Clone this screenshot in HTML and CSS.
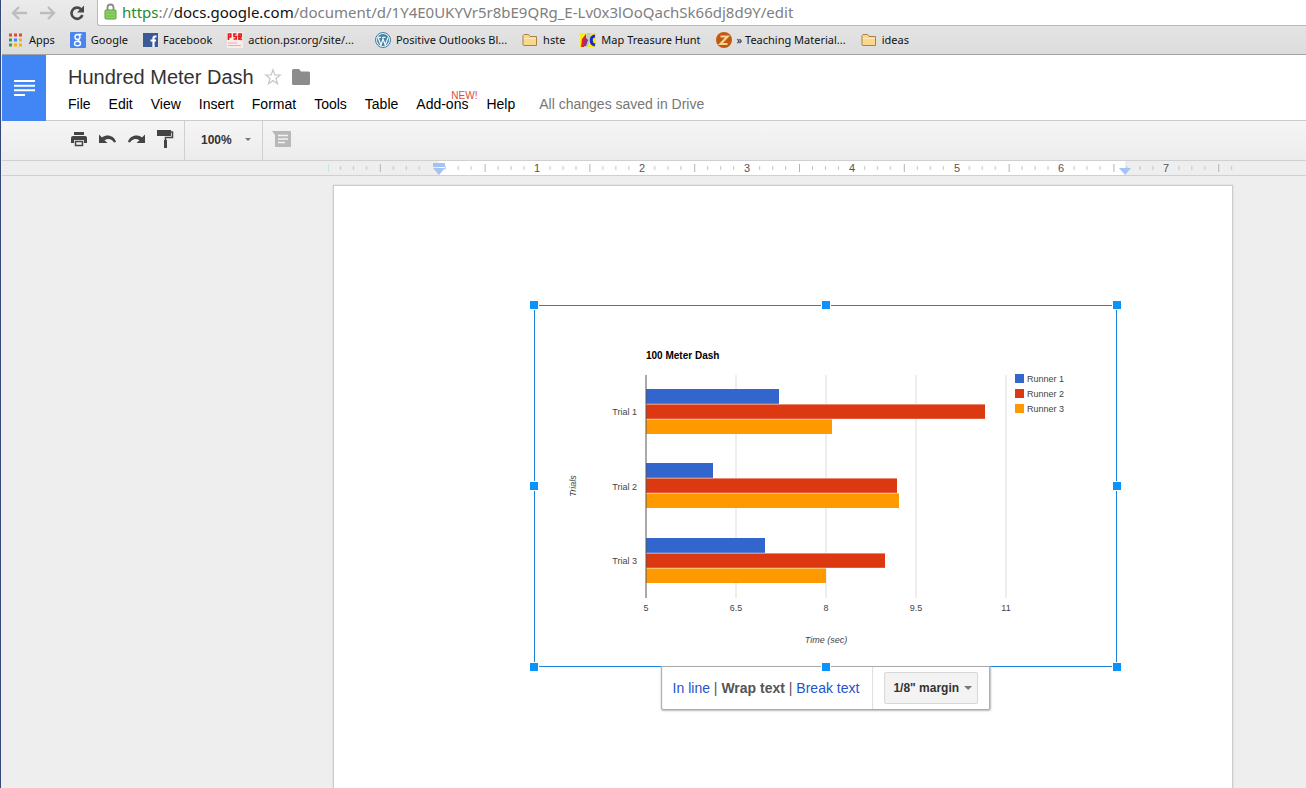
FILE: index.html
```
<!DOCTYPE html>
<html lang="en">
<head>
    <meta charset="UTF-8">
    <meta name="viewport" content="width=device-width, initial-scale=1.0">
    <title>Hundred Meter Dash</title>
    <link rel="stylesheet" href="styles.css">
</head>
<body>
    <!-- Browser bar -->
    <div class="browser">
        <div class="nav-row">
            <button class="nav-btn" aria-label="Back">
                <svg width="18" height="16" viewBox="0 0 18 16"><path d="M9 2L3 8l6 6M3 8h14" fill="none" stroke="#bdbdbd" stroke-width="2.4"/></svg>
            </button>
            <button class="nav-btn" aria-label="Forward">
                <svg width="18" height="16" viewBox="0 0 18 16"><path d="M9 2l6 6-6 6M15 8H1" fill="none" stroke="#bdbdbd" stroke-width="2.4"/></svg>
            </button>
            <button class="nav-btn" aria-label="Reload">
                <svg width="18" height="16" viewBox="0 0 18 16"><path d="M13 4.200A5.600 5.600 0 1 0 14.400 10" fill="none" stroke="#484848" stroke-width="2.600"/><path d="M16 .5v7H9z" fill="#484848"/></svg>
            </button>
            <div class="address">
                <svg width="13" height="17" viewBox="0 0 13 17"><path d="M3.500 8V4.500a3 3 0 0 1 6 0V8" fill="none" stroke="#8c8c8c" stroke-width="1.800"/><rect x="1" y="7" width="11" height="9" rx="1" fill="#8fd06a" stroke="#55a02e"/><path d="M2.500 10h8M2.500 13h8" stroke="#6ab844"/></svg>
                <div class="url" role="textbox" aria-label="Address" contenteditable="true" spellcheck="false"><span class="scheme">https</span>://<span class="host">docs.google.com</span>/document/d/1Y4E0UKYVr5r8bE9QRg_E-Lv0x3lOoQachSk66dj8d9Y/edit</div>
            </div>
        </div>
        <nav class="bookmarks">
            <a href="#">
                <svg width="16" height="16" viewBox="0 0 16 16"><path d="M1 3h3M6 3h3M11 3h3" stroke="#dd4b39" stroke-width="3"/><path d="M1 8h3" stroke="#3a9a4d" stroke-width="3"/><path d="M6 8h3" stroke="#4285f4" stroke-width="3"/><path d="M11 8h3" stroke="#f4b400" stroke-width="3"/><path d="M1 13h3" stroke="#3a9a4d" stroke-width="3"/><path d="M6 13h3M11 13h3" stroke="#f4b400" stroke-width="3"/></svg>
                Apps
            </a>
            <a href="#">
                <svg width="16" height="16" viewBox="0 0 16 16"><rect width="16" height="16" rx="1" fill="#4a86ee"/><g fill="none" stroke="#fff" stroke-width="1.400"><circle cx="7.500" cy="5" r="2.500"/><path d="M8 2.500h3.500M8.500 7.300c-1.500 1 1.800 1.800 2 3.700"/><ellipse cx="7.500" cy="11.500" rx="3" ry="2.200"/></g></svg>
                Google
            </a>
            <a href="#">
                <svg width="15" height="16" viewBox="0 0 15 16"><rect y="1" width="15" height="14" fill="#3b5998"/><path d="M13.500 4.500h-1.600c-1 0-1.400.5-1.400 1.500V15M7.500 8.500h5.500" fill="none" stroke="#fff" stroke-width="2.200"/></svg>
                Facebook
            </a>
            <a href="#">
                <svg width="16" height="16" viewBox="0 0 16 16"><rect width="16" height="16" fill="#fbecec"/><g fill="none" stroke="#e01c1c" stroke-width="1.700"><path d="M1.500 8V2h2.200v3H1.500M9.500 2H7v2.500h2.300V7H6.500M12 8V2h2.200v2.700H12l2.700 3.300"/></g><path d="M1 11h9M1 13.500h13" stroke="#f1a9a9"/></svg>
                action.psr.org/site/...
            </a>
            <a href="#" class="after-long">
                <svg width="16" height="16" viewBox="0 0 16 16"><circle cx="8" cy="8" r="7.500" fill="#e9f1f5" stroke="#3f7fa6"/><circle cx="8" cy="8" r="6" fill="#3f7fa6"/><path d="M3 5.500l3 7.500 2-6 2.300 6L13 5.500M2.500 5.300h3.500M7 5.300h3.500" fill="none" stroke="#f4f8fa" stroke-width="1.300"/></svg>
                Positive Outlooks Bl...
            </a>
            <a href="#">
                <svg width="16" height="16" viewBox="0 0 16 16"><path d="M1 13V3.500L2 2.500h4.500L8 4.500h6.500v9h-13z" fill="#fbd78c" stroke="#a9834a"/><path d="M2 6.500h12" stroke="#fdeabd"/></svg>
                hste
            </a>
            <a href="#">
                <svg width="16" height="16" viewBox="0 0 16 16"><path d="M0 1h16v14H0z" fill="#f6ec1c"/><path d="M7 1h4l-3 14H4z" fill="#bfc7d2"/><path d="M1 15l1-8 4-5v6l-2 7z" fill="#e0261c"/><path d="M5 5l3 3-2 6H4z" fill="#8b2c9b"/><path d="M15 4c-5 0-5 8 0 9" fill="none" stroke="#1c28c8" stroke-width="3"/></svg>
                Map Treasure Hunt
            </a>
            <a href="#">
                <svg width="16" height="16" viewBox="0 0 16 16"><circle cx="8" cy="8" r="8" fill="#c2590f"/><path d="M4.500 4.500h7l-7 7.500h7" fill="none" stroke="#f7d491" stroke-width="2.200"/></svg>
                » Teaching Material...
            </a>
            <a href="#">
                <svg width="16" height="16" viewBox="0 0 16 16"><path d="M1 13V3.500L2 2.500h4.500L8 4.500h6.500v9h-13z" fill="#fbd78c" stroke="#a9834a"/><path d="M2 6.500h12" stroke="#fdeabd"/></svg>
                ideas
            </a>
        </nav>
    </div>

    <!-- Document header -->
    <header class="doc-header">
        <a href="#" class="logo" aria-label="Docs home">
            <svg width="22" height="18" viewBox="0 0 22 18"><path d="M1 2h21M1 6.700h21M1 11.300h21M1 16h11" stroke="#fff" stroke-width="2"/></svg>
        </a>
        <div class="doc-head">
            <div class="title-row">
                <h1>Hundred Meter Dash</h1>
                <button aria-label="Star">
                    <svg width="18" height="18" viewBox="0 0 18 18"><path d="M9 1.800l1.900 5.100 5.400.2-4.300 3.300 1.500 5.300L9 12.600l-4.500 3.100L6 10.400 1.700 7.100l5.400-.2z" fill="#fff" stroke="#c9c9c9" stroke-width="1.300"/></svg>
                </button>
                <button aria-label="Move to folder">
                    <svg width="18" height="16" viewBox="0 0 18 16"><path d="M0 1.500Q0 0 1.500 0H7l2 2.500h7.500Q18 2.500 18 4v10.500Q18 16 16.500 16h-15Q0 16 0 14.500z" fill="#8c8c8c"/></svg>
                </button>
            </div>
            <div class="menu-row">
                <button>File</button>
                <button>Edit</button>
                <button>View</button>
                <button>Insert</button>
                <button>Format</button>
                <button>Tools</button>
                <button>Table</button>
                <button class="addons">Add-ons<span class="new">NEW!</span></button>
                <button>Help</button>
                <span class="status">All changes saved in Drive</span>
            </div>
        </div>
    </header>

    <!-- Toolbar -->
    <div class="toolbar">
        <div class="tools">
            <button aria-label="Print">
                <svg width="16" height="16" viewBox="0 0 16 16"><path d="M3 1h10v3H3zM2 5h12q2 0 2 2v5h-3V9H3v3H0V7q0-2 2-2z" fill="#444"/><path d="M4.500 10.500h7v4h-7z" fill="none" stroke="#444" stroke-width="1.500"/></svg>
            </button>
            <button aria-label="Undo">
                <svg width="17" height="16" viewBox="0 0 17 16"><path d="M0 3.500V12h8.500L5.500 9.300C9 7 13 7.800 15 11.500l2-.6C15 4.500 8 2.800 3 6.500z" fill="#444"/></svg>
            </button>
            <button aria-label="Redo">
                <svg width="17" height="16" viewBox="0 0 17 16"><path d="M17 3.500V12H8.500l3-2.700C8 7 4 7.800 2 11.500l-2-.6C2 4.500 9 2.800 14 6.500z" fill="#444"/></svg>
            </button>
            <button aria-label="Paint format">
                <svg width="17" height="18" viewBox="0 0 17 18"><path d="M0 0h14v6H0z" fill="#444"/><path d="M14 2h1.500v5.500H8.500V11" fill="none" stroke="#444" stroke-width="1.500"/><path d="M7 10h3v8H7z" fill="#444"/></svg>
            </button>
        </div>
        <div class="zoom">
            <select aria-label="Zoom">
                <option>50%</option>
                <option selected>100%</option>
                <option>150%</option>
            </select>
        </div>
        <button class="comment" aria-label="Comment">
            <svg width="19" height="17" viewBox="0 0 19 17"><path d="M0 0h19v16H3V4z" fill="#b8b8b8"/><path d="M6 4.500h10M6 8h10M6 11.500h7" stroke="#f3f3f3" stroke-width="1.500"/></svg>
        </button>
    </div>

    <div class="ruler">
        <svg viewBox="0 0 905 14" aria-hidden="true">
            <defs>
                <!-- one inch, from half mark to half mark -->
                <pattern id="inch" x="-53" width="104.800" height="14" patternUnits="userSpaceOnUse">
                    <path d="M13.500 5v4M26.500 5v4M39.500 5v4M65.500 5v4M78.500 5v4M91.500 5v4" stroke="#c4c4c4"/>
                    <path d="M.5 3v8" stroke="#b4b4b4"/>
                </pattern>
            </defs>
            <rect x="111" width="686" height="14" fill="#fff"/>
            <rect width="905" height="14" fill="url(#inch)"/>
            <path d="M.5 3v8" stroke="#c8e4e4"/>
            <g class="inches">
                <text x="209" y="11">1</text>
                <text x="314" y="11">2</text>
                <text x="419" y="11">3</text>
                <text x="524" y="11">4</text>
                <text x="629" y="11">5</text>
                <text x="733" y="11">6</text>
                <text x="838" y="11">7</text>
            </g>
            <path d="M105 2h12v4h-12zM105 7h12l-6 7zM791 7h12l-6 7z" fill="#a4c2f4"/>
        </svg>
    </div>

    <main class="canvas">
        <div class="page">
            <div class="picture">
                <svg class="chart" viewBox="0 0 581 360" role="img" aria-label="100 Meter Dash bar chart">
                    <path d="M201 69v223M291 69v223M381 69v223M471 69v223" stroke="#ddd"/>
                    <text class="chart-title" x="111" y="53">100 Meter Dash</text>
                    <g fill="#3366cc">
                        <rect x="111" y="83" width="133" height="15"/>
                        <rect x="111" y="157" width="67" height="15"/>
                        <rect x="111" y="232" width="119" height="15"/>
                        <rect x="480" y="68" width="9" height="9"/>
                    </g>
                    <g fill="#dc3912">
                        <rect x="111" y="98" width="339" height="15"/>
                        <rect x="111" y="172" width="251" height="15"/>
                        <rect x="111" y="247" width="239" height="15"/>
                        <rect x="480" y="83" width="9" height="9"/>
                    </g>
                    <g fill="#ff9900">
                        <rect x="111" y="113" width="186" height="15"/>
                        <rect x="111" y="187" width="253" height="15"/>
                        <rect x="111" y="262" width="180" height="15"/>
                        <rect x="480" y="98" width="9" height="9"/>
                    </g>
                    <path d="M111 98.200h339M111 113.200h339M111 172.200h251M111 187.200h253M111 247.200h239M111 262.200h239" stroke="#fff" stroke-width=".6"/>
                    <path d="M111 69v223" stroke="#555" stroke-width="1"/>
                    <g text-anchor="end">
                        <text x="102" y="109">Trial 1</text>
                        <text x="102" y="184">Trial 2</text>
                        <text x="102" y="258">Trial 3</text>
                    </g>
                    <text x="492" y="76">Runner 1</text>
                    <text x="492" y="91">Runner 2</text>
                    <text x="492" y="106">Runner 3</text>
                    <g text-anchor="middle">
                        <text x="111" y="305">5</text>
                        <text x="201" y="305">6.5</text>
                        <text x="291" y="305">8</text>
                        <text x="381" y="305">9.5</text>
                        <text x="471" y="305">11</text>
                        <text class="axis" x="291" y="337">Time (sec)</text>
                        <text class="axis" transform="translate(41 180) rotate(-90)">Trials</text>
                    </g>
                </svg>
                <div class="popup">
                    <div class="wrap-mode">
                        <a href="#">In line</a> | <b>Wrap text</b> | <a href="#">Break text</a>
                    </div>
                    <div class="margin-mode">
                        <div class="margin-select">
                            <select aria-label="Margin">
                                <option>0" margin</option>
                                <option selected>1/8" margin</option>
                                <option>1/4" margin</option>
                            </select>
                        </div>
                    </div>
                </div>
                <span class="handle top left"></span>
                <span class="handle top center"></span>
                <span class="handle top right"></span>
                <span class="handle middle left"></span>
                <span class="handle middle right"></span>
                <span class="handle bottom left"></span>
                <span class="handle bottom center"></span>
                <span class="handle bottom right"></span>
            </div>
        </div>
    </main>
</body>
</html>
```
FILE: styles.css
```
* {
    box-sizing: border-box;
}
body {
    display: flex;
    flex-direction: column;
    min-height: 100vh;
    margin: 0;
    padding-left: 1px;
    border-left: 1px solid #34487c;
    background-color: #eee;
    font-family: "Liberation Sans", Arial, sans-serif;
    color: #222;
    overflow: hidden;
}
button {
    padding: 0;
    border: 0;
    background: none;
    font: inherit;
    color: inherit;
}
svg {
    display: block;
    flex-shrink: 0;
}
a {
    text-decoration: none;
}

/* Browser bar */
.browser {
    border-bottom: 1px solid #a3a3a3;
    background: linear-gradient(#ebebeb, #dcdcdc);
    font-family: "Noto Sans", "Open Sans", sans-serif;
}
.nav-row {
    display: flex;
    align-items: center;
    gap: 11px;
    height: 26px;
    padding-left: 8px;
}
.nav-btn {
    padding-bottom: 1px;
}
.address {
    display: flex;
    flex: 1;
    align-items: center;
    gap: 5px;
    height: 26px;
    padding: 0 0 2px 6px;
    border: 1px solid #b9b9b9;
    border-width: 0 0 1px 1px;
    border-radius: 0 0 0 3px;
    background-color: #fff;
}
.url {
    font-size: 15px;
    line-height: 22px;
    color: #808080;
    white-space: nowrap;
}
.scheme {
    color: #2a8a2a;
}
.host {
    color: #111;
}
.bookmarks {
    display: flex;
    align-items: center;
    gap: 15px;
    height: 28px;
    padding: 0 0 1px 6px;
}
.bookmarks a {
    display: flex;
    align-items: center;
    gap: 5px;
    font-size: 11px;
    color: #111;
    white-space: nowrap;
}
.bookmarks .after-long {
    padding-left: 6px;
}

/* Document header */
.doc-header {
    display: flex;
    background-color: #fff;
}
.logo {
    display: flex;
    align-items: center;
    justify-content: center;
    width: 44px;
    background-color: #4285f4;
}
.doc-head {
    flex: 1;
    padding: 10px 0 7px 22px;
    border-bottom: 1px solid #ccc;
}
.title-row {
    display: flex;
    align-items: center;
    gap: 10px;
    height: 24px;
}
h1 {
    margin: 0;
    font-size: 20px;
    font-weight: normal;
    color: #333;
}
.menu-row {
    display: flex;
    gap: 18px;
    height: 24px;
    padding-top: 3px;
    font-size: 14px;
    line-height: 24px;
    color: #000;
}
.menu-row button {
    line-height: 24px;
}
.addons {
    position: relative;
}
.new {
    position: absolute;
    top: -2px;
    right: -9px;
    font-size: 10px;
    line-height: 12px;
    color: #dd4b39;
}
.status {
    padding-left: 6px;
    color: #777;
}

/* Toolbar */
.toolbar {
    display: flex;
    height: 40px;
    border-bottom: 1px solid #d0d0d0;
    background: linear-gradient(#f5f5f5, #ececec);
}
.tools {
    display: flex;
    align-items: center;
    gap: 12px;
    padding: 0 10px 3px 69px;
    border-right: 1px solid #d0d0d0;
}
.zoom {
    display: flex;
    align-items: center;
    position: relative;
    width: 78px;
    padding-bottom: 2px;
    border-right: 1px solid #d0d0d0;
}
.zoom::after, .margin-select::after {
    content: "";
    position: absolute;
    right: 11px;
    border: 3px solid transparent;
    border-top-color: #777;
    border-bottom: 0;
    pointer-events: none;
}
select {
    width: 100%;
    height: 28px;
    border: 0;
    background: none;
    font: bold 12px "Liberation Sans", Arial, sans-serif;
    color: #333;
    appearance: none;
}
.zoom select {
    padding: 0 0 0 16px;
}
.comment {
    padding: 0 0 2px 9px;
}

/* Ruler */
.ruler {
    padding: 0 73px 0 326px;
    border-bottom: 1px solid #d0d0d0;
}
.inches {
    font-size: 11px;
    fill: #555;
    text-anchor: middle;
}

/* Document */
.canvas {
    display: flex;
    flex: 1;
    padding: 9px 73px 0 331px;
}
.page {
    flex: 1;
    padding: 119px 115px 0 200px;
    border: 1px solid #ccc;
    border-bottom: 0;
    background-color: #fff;
    box-shadow: 0 0 2px #ccc;
}
.picture {
    position: relative;
    border: 1px solid #1a83d8;
}
.chart {
    font-size: 9px;
    fill: #444;
}
.chart-title {
    font-size: 10px;
    font-weight: bold;
    fill: #000;
}
.axis {
    font-style: italic;
}
.handle {
    position: absolute;
    width: 10px;
    height: 10px;
    border: 1px solid #fff;
    background-color: #0a94fb;
}
.top {
    top: -6px;
}
.middle {
    top: calc(50% - 5px);
}
.bottom {
    bottom: -6px;
}
.left {
    left: -6px;
}
.center {
    left: calc(50% - 5px);
}
.right {
    right: -6px;
}

/* Wrapping options under the picture */
.popup {
    position: absolute;
    top: 100%;
    left: 50%;
    display: flex;
    width: max-content;
    border: 1px solid #aaa;
    border-radius: 0 0 2px 2px;
    background-color: #fff;
    box-shadow: 0 1px 2px #bbb;
    transform: translateX(-50%);
}
.wrap-mode {
    padding: 1px 13px 0 11px;
    border-right: 1px solid #ddd;
    font-size: 14px;
    line-height: 41px;
    color: #555;
}
.wrap-mode a {
    color: #2255cc;
}
.margin-mode {
    padding: 5px 11px;
}
.margin-select {
    display: flex;
    align-items: center;
    position: relative;
    width: 94px;
    border: 1px solid #d6d6d6;
    border-radius: 2px;
    background-color: #f3f3f3;
}
.margin-select::after {
    right: 5px;
    border-width: 4px 4px 0;
}
.margin-select select {
    height: 30px;
    padding: 0 0 0 8px;
}
```
